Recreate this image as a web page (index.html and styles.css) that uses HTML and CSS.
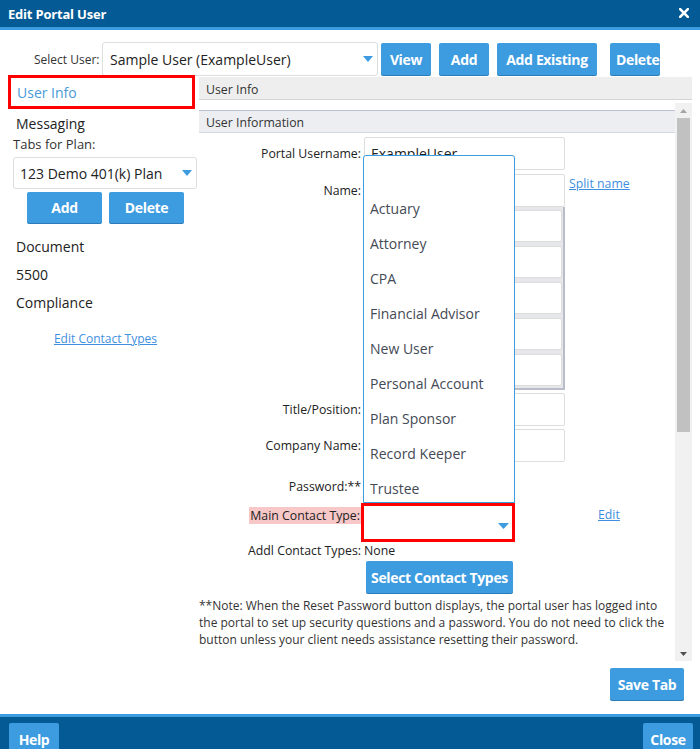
FILE: index.html
```html
<!DOCTYPE html>
<html>
<head>
<meta charset="utf-8">
<title>Edit Portal User</title>
<link rel="stylesheet" href="styles.css">
</head>
<body>
<div class="dialog">
  <header class="titlebar">
    <span class="title">Edit Portal User</span>
    <svg class="close" width="10" height="10" viewBox="0 0 10 10"><path d="M1.2 1.2L8.8 8.8M8.8 1.2L1.2 8.8" stroke="#fff" stroke-width="2.6" stroke-linecap="square"/></svg>
  </header>

  <div class="userbar">
    <span class="sel-label">Select User:</span>
    <div class="select user-select">
      <span>Sample User (ExampleUser)</span>
      <svg class="caret" width="10" height="6" viewBox="0 0 10 6"><path d="M0 0H10L5 6Z" fill="#3d9be0"/></svg>
    </div>
    <button class="btn b-view">View</button>
    <button class="btn b-add">Add</button>
    <button class="btn b-exist">Add Existing</button>
    <button class="btn b-del">Delete</button>
  </div>

  <div class="main">
    <aside class="left">
      <div class="nav-active">User Info</div>
      <div class="nav-item msg">Messaging</div>
      <div class="tabs-label">Tabs for Plan:</div>
      <div class="select plan-select">
        <span>123 Demo 401(k) Plan</span>
        <svg class="caret" width="10" height="6" viewBox="0 0 10 6"><path d="M0 0H10L5 6Z" fill="#3d9be0"/></svg>
      </div>
      <div class="plan-btns">
        <button class="btn small">Add</button>
        <button class="btn small">Delete</button>
      </div>
      <div class="nav-list">
        <div class="nav-item">Document</div>
        <div class="nav-item">5500</div>
        <div class="nav-item">Compliance</div>
      </div>
      <a class="link edit-types" href="#">Edit Contact Types</a>
    </aside>

    <section class="right">
      <div class="tabbar">User Info</div>
      <div class="scroller">
        <div class="content">
          <div class="sect-head">User Information</div>

          <div class="row r-first">
            <label class="lbl">Portal Username:</label>
            <div class="input"><span class="val">ExampleUser</span></div>
          </div>
          <div class="row r-name">
            <label class="lbl">Name:</label>
            <div class="input"></div>
            <a class="link split" href="#">Split name</a>
          </div>
          <div class="name-box">
            <div class="input inner"></div>
            <div class="input inner"></div>
            <div class="input inner"></div>
            <div class="input inner"></div>
            <div class="input inner"></div>
          </div>
          <div class="row r-title">
            <label class="lbl">Title/Position:</label>
            <div class="input"></div>
          </div>
          <div class="row r-company">
            <label class="lbl">Company Name:</label>
            <div class="input"></div>
          </div>
          <div class="row r-pass">
            <label class="lbl">Password:**</label>
          </div>
          <div class="row r-main">
            <label class="lbl top"><span class="hl">Main Contact Type:</span></label>
            <div class="main-select">
              <svg class="caret" width="11" height="6" viewBox="0 0 11 6"><path d="M0 0H11L5.5 6Z" fill="#3d9be0"/></svg>
            </div>
            <a class="link edit" href="#">Edit</a>
          </div>
          <div class="row r-addl">
            <label class="lbl">Addl Contact Types:</label>
            <span class="none">None</span>
          </div>
          <button class="btn sct">Select Contact Types</button>
          <p class="note">**Note: When the Reset Password button displays, the portal user has logged into the portal to set up security questions and a password. You do not need to click the button unless your client needs assistance resetting their password.</p>
        </div>
        <div class="scrollbar">
          <div class="sb-btn"><svg width="7" height="4" viewBox="0 0 7 4"><path d="M0 4H7L3.5 0Z" fill="#a3a3a3"/></svg></div>
          <div class="sb-thumb"></div>
          <div class="sb-fill"></div>
          <div class="sb-btn"><svg width="7" height="4" viewBox="0 0 7 4"><path d="M0 0H7L3.5 4Z" fill="#505050"/></svg></div>
        </div>
      </div>
      <div class="save-row"><button class="btn">Save Tab</button></div>
    </section>
  </div>

  <footer class="footer">
    <button class="btn">Help</button>
    <button class="btn">Close</button>
  </footer>

  <ul class="dropdown">
    <li></li>
    <li>Actuary</li>
    <li>Attorney</li>
    <li>CPA</li>
    <li>Financial Advisor</li>
    <li>New User</li>
    <li>Personal Account</li>
    <li>Plan Sponsor</li>
    <li>Record Keeper</li>
    <li>Trustee</li>
  </ul>
</div>
</body>
</html>
```

FILE: styles.css
```css
* { box-sizing: border-box; }
html, body { margin: 0; padding: 0; }
body {
  width: 700px;
  height: 749px;
  overflow: hidden;
  background: #fff;
  font-family: "Open Sans", "DejaVu Sans", sans-serif;
  color: #333;
}
.dialog {
  position: relative;
  width: 700px;
  height: 749px;
  display: flex;
  flex-direction: column;
}

/* title bar */
.titlebar {
  flex: none;
  height: 30px;
  background: #035a94;
  border-bottom: 3px solid #3d9be0;
  display: flex;
  align-items: center;
  justify-content: space-between;
  padding: 0 11px 0 8px;
  color: #fff;
}
.title { font-weight: 700; font-size: 13px; line-height: 18px; letter-spacing: -0.2px; }
.close { display: block; margin-top: -1px; }

/* buttons */
.btn {
  font-family: "Open Sans", "DejaVu Sans", sans-serif;
  font-weight: 700;
  font-size: 14px;
  letter-spacing: -0.35px;
  white-space: nowrap;
  color: #fff;
  background: #3d9be0;
  border: none;
  border-radius: 2px;
  box-shadow: 0 1px 0 #2c7cb8;
  height: 32px;
  min-width: 50px;
  padding: 0 6px;
  cursor: pointer;
  flex: none;
}

/* select user row */
.userbar {
  flex: none;
  height: 34px;
  margin-top: 12px;
  display: flex;
  align-items: center;
  padding-left: 34px;
}
.sel-label { font-size: 12px; width: 65px; white-space: nowrap; }
.select {
  display: flex;
  align-items: center;
  justify-content: space-between;
  background: #fff;
  border: 1px solid #ddd;
  border-radius: 3px;
  font-size: 14px;
  color: #222;
  white-space: nowrap;
}
.user-select {
  width: 276px;
  height: 34px;
  margin-left: 3px;
  padding: 0 4px 0 7px;
}
.b-view { margin-left: 3px; width: 50px; }
.b-add { margin-left: 8px; width: 50px; }
.b-exist { margin-left: 8px; width: 100px; }
.b-del { margin-left: 13px; width: 50px; }

/* main area */
.main {
  flex: 1;
  display: flex;
  min-height: 0;
}

/* left column */
.left { width: 199px; flex: none; }
.nav-active {
  margin: -1px 0 0 8px;
  width: 187px;
  height: 34px;
  border: 3px solid #f00;
  display: flex;
  align-items: center;
  padding-left: 6px;
  color: #4a9ad8;
  font-size: 14px;
}
.nav-item { font-size: 14px; padding-left: 16px; color: #222; }
.msg { margin-top: 5px; line-height: 19px; }
.tabs-label { font-size: 13px; line-height: 18px; margin-top: 2px; padding-left: 13px; color: #333; }
.plan-select {
  margin: 4px 0 0 13px;
  width: 184px;
  height: 32px;
  padding: 0 4px 0 6px;
}
.plan-btns {
  margin-top: 3px;
  padding-left: 27px;
  display: flex;
  gap: 7px;
}
.btn.small { width: 75px; height: 31px; }
.nav-list { margin-top: 10px; }
.nav-list .nav-item { line-height: 28px; }
.link { color: #3f8fe0; text-decoration: underline; }
.edit-types {
  display: block;
  margin: 14px 0 0 13px;
  width: 185px;
  text-align: center;
  font-size: 12px;
  line-height: 16px;
}

/* right column */
.right {
  flex: 1;
  display: flex;
  flex-direction: column;
  padding-right: 8px;
}
.tabbar {
  margin-top: 1px;
  height: 23px;
  background: #eeeeee;
  border-bottom: 1px solid #d4d4d4;
  font-size: 12.3px;
  line-height: 22px;
  padding: 2px 0 0 7px;
  color: #333;
}
.scroller {
  margin-top: 3px;
  height: 558px;
  display: flex;
}
.content {
  flex: 1;
  padding-top: 7px;
  overflow: hidden;
}
.sect-head {
  height: 23px;
  background: #eceef1;
  border-top: 1px solid #b9c3cf;
  border-bottom: 1px solid #d3d9e0;
  font-size: 12.3px;
  line-height: 21px;
  padding: 1px 0 0 7px;
  color: #333;
}
.row { display: flex; align-items: center; }
.lbl {
  width: 162px;
  flex: none;
  text-align: right;
  font-size: 12.3px;
  color: #222;
  white-space: nowrap;
}
.input {
  width: 201px;
  height: 33px;
  margin-left: 3px;
  background: #fff;
  border: 1px solid #ddd;
  border-radius: 2px;
  display: flex;
  align-items: center;
  padding-left: 6px;
  flex: none;
}
.val { font-size: 14px; color: #222; }
.r-first { margin-top: 4px; }
.r-name { margin-top: 4px; align-items: flex-start; }
.r-name .lbl { line-height: 33px; }
.split { font-size: 12.3px; margin: 2px 0 0 4px; line-height: 16px; }
.name-box {
  margin-left: 165px;
  width: 201px;
  background: #e6e7ea;
  border-right: 2px solid #b9bdca;
  border-bottom: 2px solid #b9bdca;
  padding: 3px 1px 2px 1px;
  display: flex;
  flex-direction: column;
  gap: 4px;
}
.input.inner { width: 197px; height: 32px; margin-left: 0; }
.r-title { margin-top: 3px; }
.r-company { margin-top: 3px; }
.r-pass { margin-top: 9px; height: 30px; }
.r-main { margin-top: 2px; align-items: flex-start; }
.lbl.top { margin-top: 5px; line-height: 16px; }
.hl { background: #f8c8c8; padding: 0 1px 0 1px; }
.main-select {
  width: 154px;
  height: 39px;
  border: 3px solid #f00;
  background: #fff;
  display: flex;
  align-items: center;
  justify-content: flex-end;
  padding: 6px 3px 0 0;
  flex: none;
}
.edit { font-size: 12.3px; line-height: 16px; margin: 4px 0 0 83px; }
.r-addl { margin-top: 1px; line-height: 16px; }
.none { font-size: 12.3px; margin-left: 3px; color: #222; }
.btn.sct { display: block; margin: 2px 0 0 167px; width: 147px; height: 32px; padding: 0; }
.note {
  margin: 4px 0 0 0;
  padding-right: 4px;
  font-size: 12px;
  line-height: 17px;
  color: #333;
}

/* fake scrollbar */
.scrollbar {
  width: 17px;
  flex: none;
  background: #f1f1f1;
  display: flex;
  flex-direction: column;
  padding: 0 2px;
}
.sb-btn { height: 15px; display: flex; align-items: center; justify-content: center; flex: none; }
.sb-thumb { height: 314px; background: #c1c1c1; flex: none; }
.sb-fill { flex: 1; }

.save-row {
  margin-top: 7px;
  display: flex;
  justify-content: flex-end;
  padding-right: 8px;
}
.save-row .btn { width: 74px; }

/* footer */
.footer {
  flex: none;
  height: 35px;
  background: #035a94;
  border-top: 3px solid #3d9be0;
  display: flex;
  justify-content: space-between;
  align-items: flex-start;
  padding: 6px 7px 0 9px;
  overflow: hidden;
}
.footer .btn { width: 50px; }

/* open dropdown list (overlay) */
.dropdown {
  position: absolute;
  left: 363px;
  top: 155px;
  width: 152px;
  height: 348px;
  margin: 0;
  padding: 0;
  list-style: none;
  background: #fff;
  border: 1px solid #3d9be0;
  border-radius: 3px 3px 0 0;
  overflow: hidden;
}
.dropdown li {
  height: 35px;
  line-height: 35px;
  padding-left: 6px;
  font-size: 14px;
  color: #444a55;
  white-space: nowrap;
}
```
